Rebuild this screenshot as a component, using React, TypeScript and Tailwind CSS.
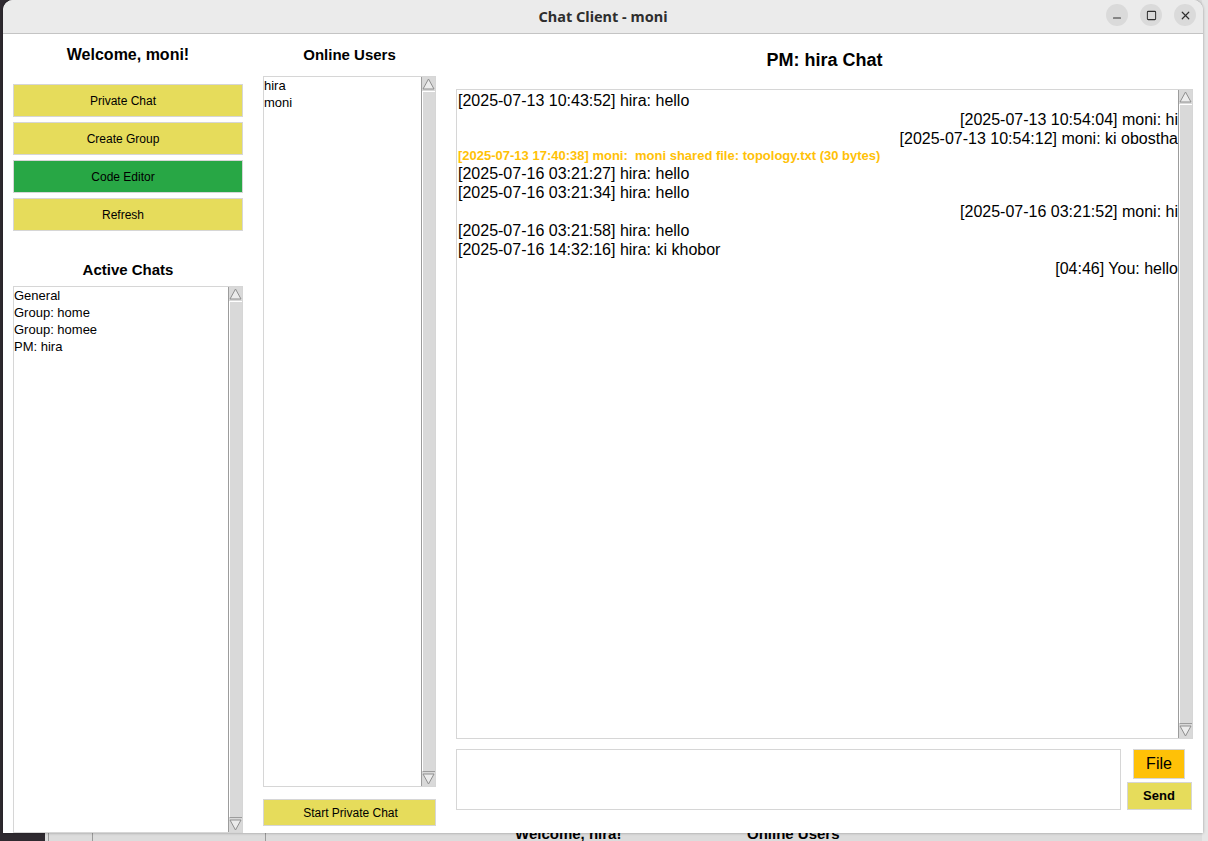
import { Minus, Square, X } from 'lucide-react';

const tk = "font-['Liberation_Sans',Arial,sans-serif]";

function Arrow({ dir }: { dir: 'up' | 'down' }) {
  return (
    <svg width="13" height="14" viewBox="0 0 13 14" className="block shrink-0">
      {dir === 'up' ? (
        <polygon points="6.5,2 12,12 1,12" fill="#ececec" stroke="#8f8f8f" strokeWidth="1" />
      ) : (
        <polygon points="1,2 12,2 6.5,12" fill="#ececec" stroke="#8f8f8f" strokeWidth="1" />
      )}
    </svg>
  );
}

function VScroll() {
  return (
    <div className="flex w-[14px] shrink-0 flex-col border-l border-[#9c9c9c] bg-[#d9d9d9]">
      <Arrow dir="up" />
      <div className="flex-1 border-t border-l border-white border-b border-b-[#9c9c9c]" />
      <Arrow dir="down" />
    </div>
  );
}

function TkButton({ label, color, className = '' }: { label: string; color: string; className?: string }) {
  return (
    <button
      className={`flex items-center justify-center border border-[#d6d6d6] text-[12px] text-black ${color} ${className}`}
    >
      {label}
    </button>
  );
}

const messages: { text: string; side: 'left' | 'right' | 'file' }[] = [
  { text: '[2025-07-13 10:43:52] hira: hello', side: 'left' },
  { text: '[2025-07-13 10:54:04] moni: hi', side: 'right' },
  { text: '[2025-07-13 10:54:12] moni: ki obostha', side: 'right' },
  { text: '[2025-07-13 17:40:38] moni:  moni shared file: topology.txt (30 bytes)', side: 'file' },
  { text: '[2025-07-16 03:21:27] hira: hello', side: 'left' },
  { text: '[2025-07-16 03:21:34] hira: hello', side: 'left' },
  { text: '[2025-07-16 03:21:52] moni: hi', side: 'right' },
  { text: '[2025-07-16 03:21:58] hira: hello', side: 'left' },
  { text: '[2025-07-16 14:32:16] hira: ki khobor', side: 'left' },
  { text: '[04:46] You: hello', side: 'right' }
];

export default function App() {
  return (
    <div className="relative h-[841px] w-[1208px] overflow-hidden bg-[#dcdcdc]">
      {/* desktop behind the window */}
      <div className="absolute left-0 top-0 h-full w-[45px] bg-[#2f2a30]" />
      <div className="absolute right-0 top-0 h-full w-[6px] bg-[#e6e6e6]" />
      <div className="absolute left-[48px] top-[833px] h-[8px] w-[1px] bg-[#9a9a9a]" />
      <div className="absolute left-[92px] top-[833px] h-[8px] w-[1px] bg-[#9a9a9a]" />
      <div className="absolute left-[265px] top-[833px] h-[8px] w-[1px] bg-[#9a9a9a]" />
      <div className={`absolute left-[515px] top-[826px] text-[15px] font-bold leading-[16px] text-black ${tk}`}>
        Welcome, hira!
      </div>
      <div className={`absolute left-[747px] top-[826px] text-[15px] font-bold leading-[16px] text-black ${tk}`}>
        Online Users
      </div>

      {/* chat client window */}
      <div className="absolute left-[3px] top-0 z-10 flex h-[833px] w-[1200px] flex-col overflow-hidden rounded-t-[10px] bg-white shadow-[0_0_3px_rgba(0,0,0,0.35)]">
        {/* title bar */}
        <div className="relative flex h-[34px] shrink-0 items-center justify-center border-b border-[#c4c4c4] bg-[#ebebeb]">
          <span className="font-['Noto_Sans',sans-serif] text-[14.5px] font-bold text-[#2e2e2e]">Chat Client - moni</span>
          <div className="absolute right-[7px] top-[4px] flex gap-[12px]">
            <div className="flex h-[22px] w-[22px] items-center justify-center rounded-full bg-[#dadada] text-[#2e2e2e]">
              <Minus size={12} strokeWidth={2.2} className="translate-y-[3px]" />
            </div>
            <div className="flex h-[22px] w-[22px] items-center justify-center rounded-full bg-[#dadada] text-[#2e2e2e]">
              <Square size={11} strokeWidth={2.2} />
            </div>
            <div className="flex h-[22px] w-[22px] items-center justify-center rounded-full bg-[#dadada] text-[#2e2e2e]">
              <X size={13} strokeWidth={2.2} />
            </div>
          </div>
        </div>

        {/* body */}
        <div className={`flex min-h-0 flex-1 gap-[20px] pl-[10px] pr-[10px] ${tk}`}>
          {/* left column */}
          <div className="flex w-[230px] shrink-0 flex-col">
            <h2 className="mt-[11px] text-center text-[16px] font-bold leading-[20px] text-black">Welcome, moni!</h2>
            <div className="mt-[19px] flex flex-col gap-[5px]">
              <TkButton label="Private Chat" color="bg-[#e6dc5b]" className="h-[33px] pr-[10px]" />
              <TkButton label="Create Group" color="bg-[#e6dc5b]" className="h-[33px] pr-[10px]" />
              <TkButton label="Code Editor" color="bg-[#28a745]" className="h-[33px] pr-[10px]" />
              <TkButton label="Refresh" color="bg-[#e6dc5b]" className="h-[33px] pr-[10px]" />
            </div>
            <h2 className="mt-[29px] text-center text-[15px] font-bold leading-[20px] text-black">Active Chats</h2>
            <div className="mt-[6px] flex min-h-0 flex-1 border border-[#d6d6d6]">
              <ul className="flex-1 text-[13px] leading-[17px] text-black">
                <li>General</li>
                <li>Group: home</li>
                <li>Group: homee</li>
                <li>PM: hira</li>
              </ul>
              <VScroll />
            </div>
          </div>

          {/* online users column */}
          <div className="flex w-[173px] shrink-0 flex-col">
            <h2 className="mt-[11px] text-center text-[15px] font-bold leading-[20px] text-black">Online Users</h2>
            <div className="mt-[11px] flex h-[711px] border border-[#d6d6d6]">
              <ul className="flex-1 text-[13px] leading-[17px] text-black">
                <li>hira</li>
                <li>moni</li>
              </ul>
              <VScroll />
            </div>
            <TkButton label="Start Private Chat" color="bg-[#e6dc5b]" className="mt-[12px] h-[27px] pl-[2px]" />
          </div>

          {/* chat column */}
          <div className="flex w-[737px] shrink-0 flex-col">
            <h1 className="mt-[14px] text-center text-[18px] font-bold leading-[24px] text-black">PM: hira Chat</h1>
            <div className="mt-[17px] flex h-[650px] border border-[#d6d6d6]">
              <div className="flex-1 pl-[1px] pt-[1px] text-[16px] leading-[19px] text-black">
                {messages.map((m, i) =>
                  m.side === 'file' ? (
                    <div key={i} className="whitespace-pre text-[13px] font-bold leading-[16px] text-[#ffc107]">
                      {m.text}
                    </div>
                  ) : (
                    <div key={i} className={m.side === 'right' ? 'text-right' : 'text-left'}>
                      {m.text}
                    </div>
                  )
                )}
              </div>
              <VScroll />
            </div>
            <div className="mt-[10px] flex">
              <div className="h-[61px] w-[665px] border border-[#d6d6d6]" />
              <div className="flex flex-1 flex-col items-center pl-[4px]">
                <button className="flex h-[30px] w-[52px] items-center justify-center border border-[#d6d6d6] bg-[#ffc107] text-[16px] text-black">
                  File
                </button>
                <button className="mt-[3px] flex h-[28px] w-[65px] items-center justify-center border border-[#d6d6d6] bg-[#e6dc5b] text-[13px] font-bold text-black">
                  Send
                </button>
              </div>
            </div>
          </div>
        </div>
      </div>
    </div>
  );
}
